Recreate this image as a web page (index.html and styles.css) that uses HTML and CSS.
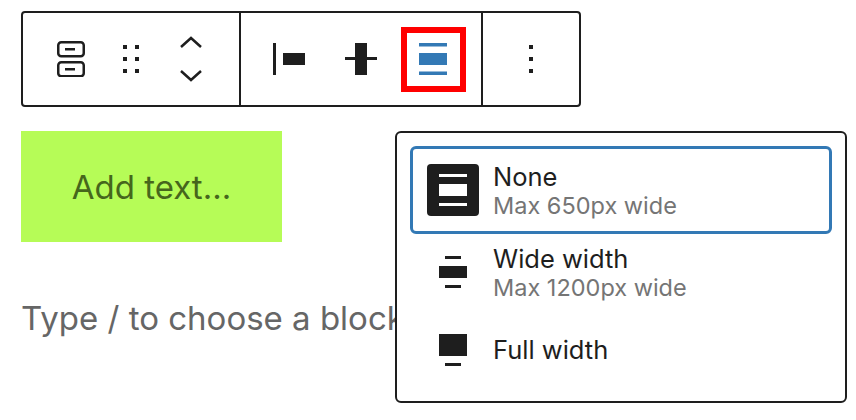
FILE: index.html
```html
<!DOCTYPE html>
<html lang="en">
<head>
    <meta charset="UTF-8">
    <title>Button block width</title>
    <link rel="stylesheet" href="styles.css">
</head>
<body>
    <div class="toolbar">
        <div class="group group_block">
            <span class="tool tool_wide">
                <svg class="ico_block" width="28" height="36" viewBox="0 0 28 36" fill="none" stroke="#1e1e1e" stroke-width="2.5">
                    <rect x="1.25" y="1.25" width="25.5" height="14" rx="3"/>
                    <rect x="1.25" y="21.25" width="25.5" height="14" rx="3"/>
                    <path d="M8 8.25h10M8 28.25h10"/>
                </svg>
            </span>
            <span class="tool tool_wide">
                <svg width="16" height="28" viewBox="0 0 16 28" fill="#1e1e1e">
                    <rect x="0" y="0" width="4" height="4"/><rect x="12" y="0" width="4" height="4"/>
                    <rect x="0" y="12" width="4" height="4"/><rect x="12" y="12" width="4" height="4"/>
                    <rect x="0" y="24" width="4" height="4"/><rect x="12" y="24" width="4" height="4"/>
                </svg>
            </span>
            <span class="tool tool_wide">
                <svg width="24" height="46" viewBox="0 0 24 46" fill="none" stroke="#1e1e1e" stroke-width="2.5">
                    <path d="M2 11l10-9 10 9M2 35l10 9 10-9"/>
                </svg>
            </span>
        </div>
        <div class="group group_align">
            <span class="tool tool_align">
                <svg width="32" height="32" viewBox="0 0 32 32" fill="#1e1e1e">
                    <rect x="0" y="0" width="3" height="32"/><rect x="10" y="10" width="22" height="12"/>
                </svg>
            </span>
            <span class="tool tool_align">
                <svg width="32" height="32" viewBox="0 0 32 32" fill="#1e1e1e">
                    <rect x="0" y="14" width="32" height="3"/><rect x="10" y="0" width="12" height="32"/>
                </svg>
            </span>
            <span class="tool tool_align">
                <span class="active_box">
                    <svg width="28" height="32" viewBox="0 0 28 32" fill="#3379b5">
                        <rect x="0" y="0" width="28" height="3.5"/><rect x="0" y="10" width="28" height="12"/><rect x="0" y="28.5" width="28" height="3.5"/>
                    </svg>
                </span>
            </span>
        </div>
        <div class="group group_more">
            <svg width="4" height="28" viewBox="0 0 4 28" fill="#1e1e1e">
                <rect x="0" y="0" width="4" height="4"/><rect x="0" y="12" width="4" height="4"/><rect x="0" y="24" width="4" height="4"/>
            </svg>
        </div>
    </div>

    <div class="content">
        <div class="left_col">
            <div class="green_btn">Add text...</div>
            <p class="placeholder">Type / to choose a block</p>
        </div>
        <div class="popover">
            <div class="option option_selected">
                <span class="tile">
                    <svg width="28" height="32" viewBox="0 0 28 32" fill="#fff">
                        <rect x="0" y="0" width="28" height="3"/><rect x="0" y="10" width="28" height="12"/><rect x="0" y="29" width="28" height="3"/>
                    </svg>
                </span>
                <div class="opt_text">
                    <div class="opt_title">None</div>
                    <div class="opt_sub">Max 650px wide</div>
                </div>
            </div>
            <div class="option">
                <span class="tile tile_plain">
                    <svg width="28" height="32" viewBox="0 0 28 32" fill="#1e1e1e">
                        <rect x="6" y="0" width="16" height="3"/><rect x="0" y="10" width="28" height="12"/><rect x="6" y="29" width="16" height="3"/>
                    </svg>
                </span>
                <div class="opt_text">
                    <div class="opt_title">Wide width</div>
                    <div class="opt_sub">Max 1200px wide</div>
                </div>
            </div>
            <div class="option option_short">
                <span class="tile tile_plain">
                    <svg width="28" height="32" viewBox="0 0 28 32" fill="#1e1e1e">
                        <rect x="0" y="0" width="28" height="22"/><rect x="6" y="29" width="16" height="3"/>
                    </svg>
                </span>
                <div class="opt_title">Full width</div>
            </div>
        </div>
    </div>
</body>
</html>
```

FILE: styles.css
```css
body{
    margin: 0;
    padding: 11px 8px 0 21px;
    background: #fff;
    font-family: Inter, 'Noto Sans', sans-serif;
    color: #1e1e1e;
}
svg{
    display: block;
}

/* toolbar */
.toolbar{
    display: flex;
    box-sizing: border-box;
    width: 560px;
    height: 96px;
    border: 2px solid #1e1e1e;
    border-radius: 4px;
}
.group{
    display: flex;
    align-items: center;
    box-sizing: border-box;
    border-right: 2px solid #1e1e1e;
}
.group_block{
    width: 218px;
    padding-left: 18px;
}
.group_align{
    width: 242px;
    padding-left: 12px;
}
.group_more{
    flex: 1;
    justify-content: center;
    border-right: none;
}
.tool{
    display: flex;
    justify-content: center;
    align-items: center;
}
.tool_wide{
    width: 60px;
}
.tool_align{
    width: 72px;
}
.active_box{
    display: flex;
    justify-content: center;
    align-items: center;
    box-sizing: border-box;
    width: 65px;
    height: 65px;
    border: 6px solid #ff0000;
}

/* content under the toolbar */
.content{
    display: flex;
    margin-top: 24px;
}
.left_col{
    width: 374px;
    flex-shrink: 0;
    white-space: nowrap;
}
.green_btn{
    display: flex;
    justify-content: center;
    align-items: center;
    width: 261px;
    height: 111px;
    background: #b6fc57;
    color: #46661c;
    font-size: 33px;
}
.placeholder{
    margin: 56px 0 0 0;
    font-size: 33px;
    color: #666;
}

/* popover */
.popover{
    position: relative;
    box-sizing: border-box;
    width: 452px;
    height: 272px;
    padding: 13px 13px 0 13px;
    background: #fff;
    border: 2px solid #1e1e1e;
    border-radius: 6px;
}
.option{
    display: flex;
    align-items: center;
    gap: 14px;
    box-sizing: border-box;
    height: 88px;
    padding: 0 14px;
    border: 3px solid transparent;
    border-radius: 6px;
}
.option_selected{
    border-color: #3379b5;
    margin-bottom: -6px;
}
.option_short{
    height: 68px;
}
.tile{
    display: flex;
    justify-content: center;
    align-items: center;
    width: 52px;
    height: 52px;
    background: #1e1e1e;
    border-radius: 4px;
}
.tile_plain{
    background: transparent;
}
.opt_text{
    padding-top: 2px;
}
.opt_title{
    font-size: 25.5px;
    line-height: 30px;
}
.opt_sub{
    font-size: 23.5px;
    line-height: 28px;
    color: #757575;
}
```
